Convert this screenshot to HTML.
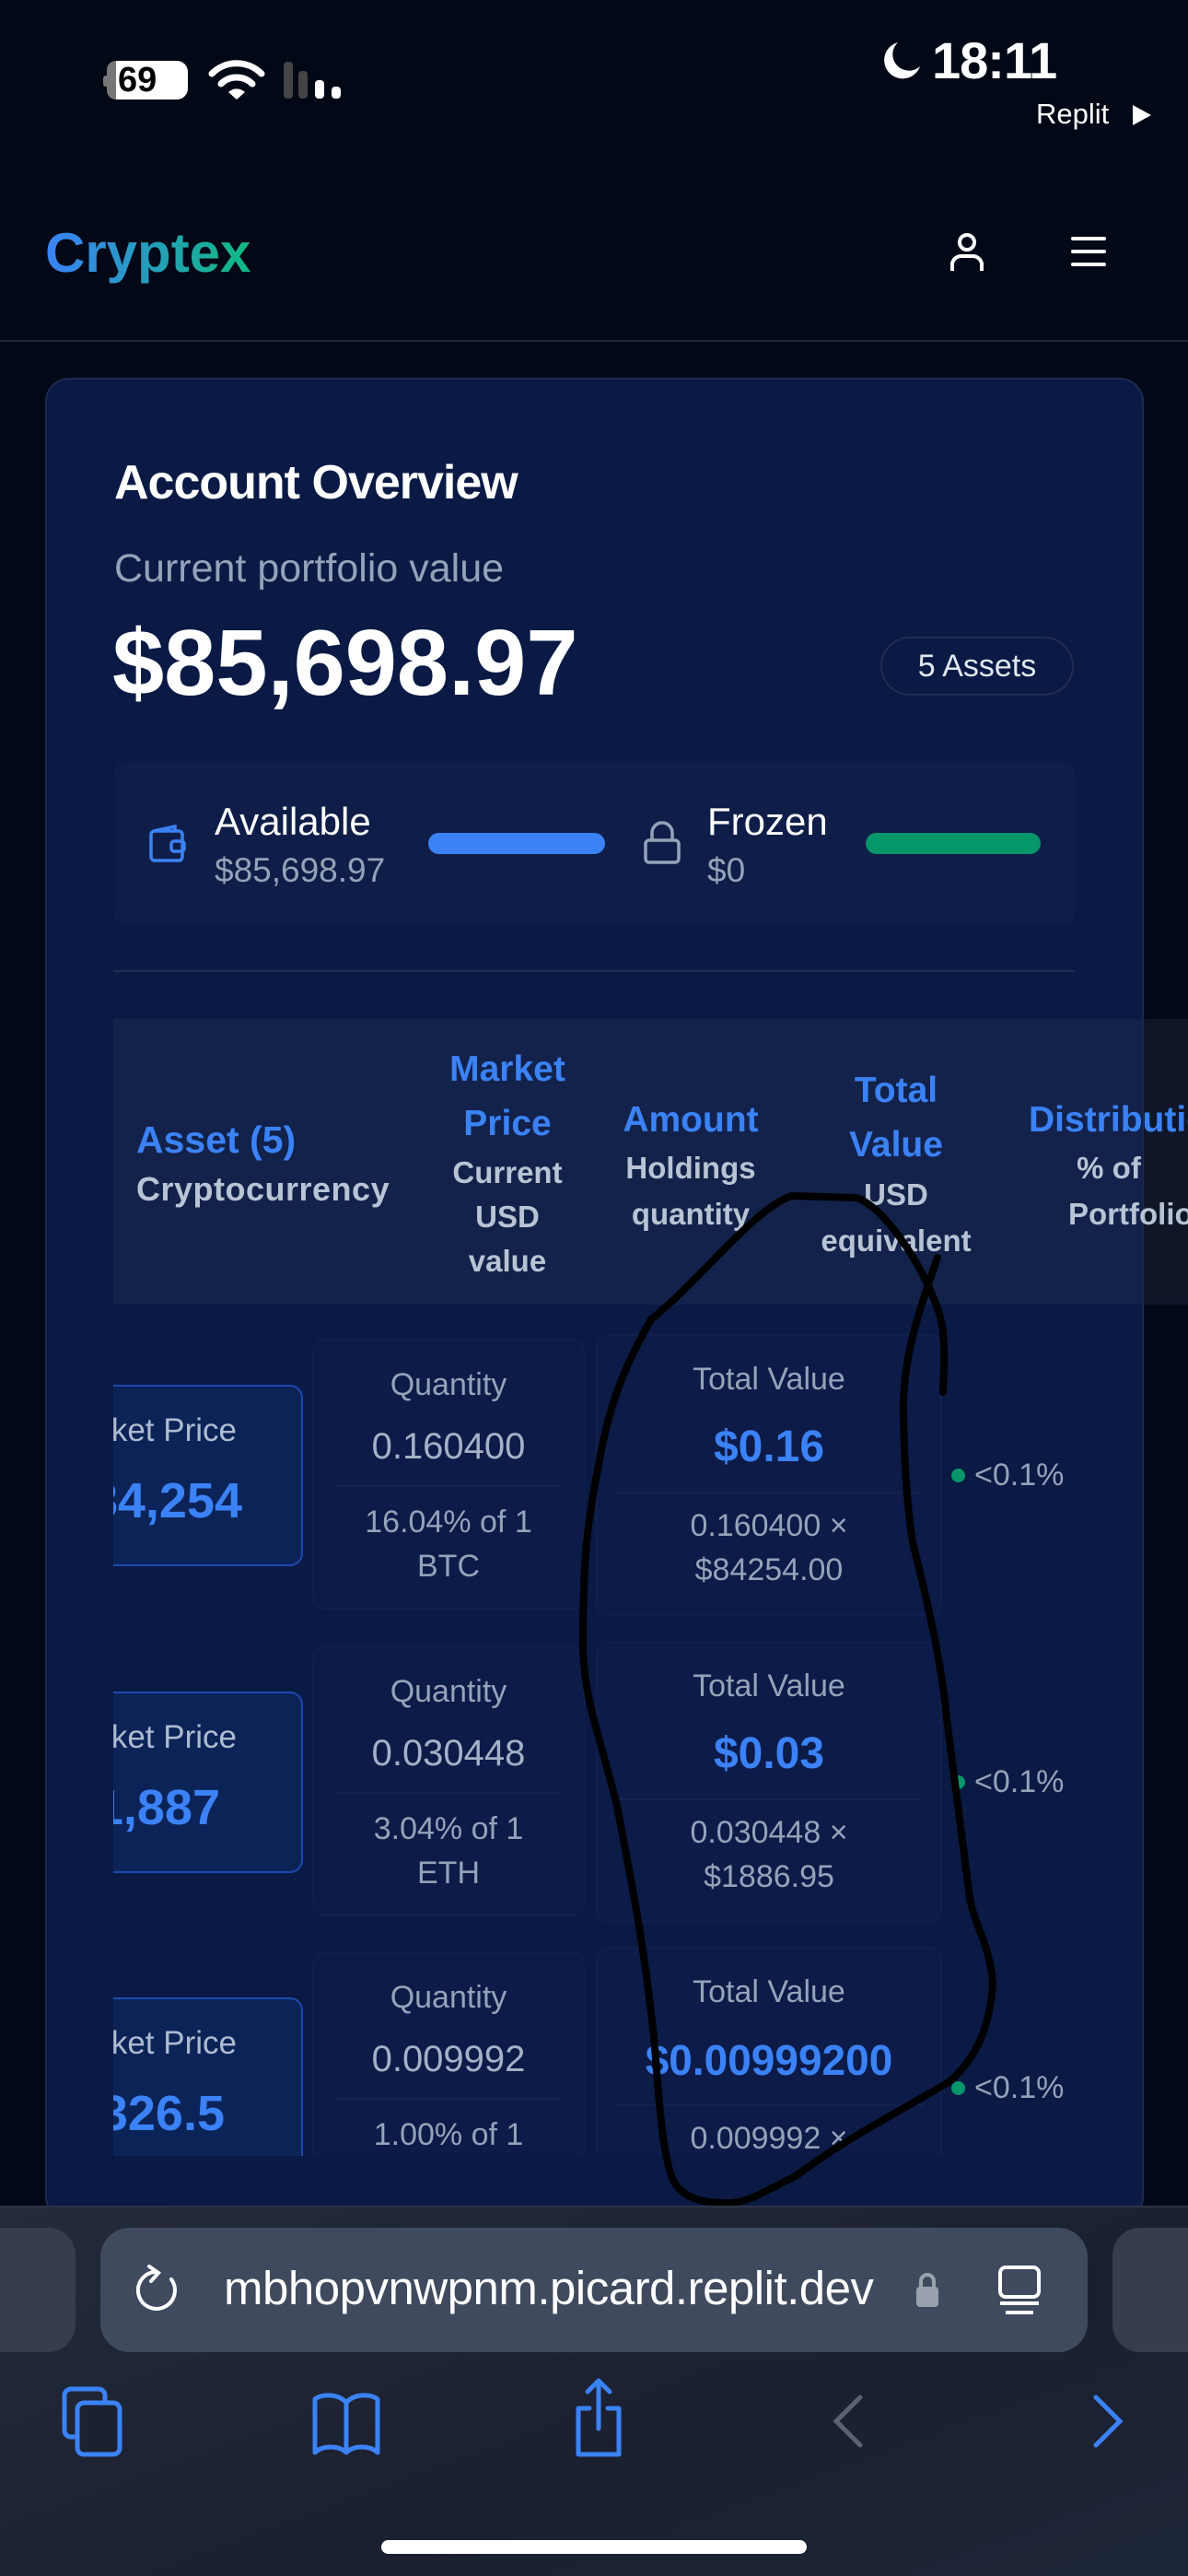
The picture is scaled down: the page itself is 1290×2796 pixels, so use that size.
<!DOCTYPE html>
<html><head><meta charset="utf-8">
<style>
*{margin:0;padding:0;box-sizing:border-box}
html,body{width:1290px;height:2796px;overflow:hidden;background:#030816;font-family:"Liberation Sans",sans-serif}
.a{position:absolute;white-space:nowrap}
.c{text-align:center}
.blue{color:#3b82f6}
.gr{color:#94a3b8}
.lg{color:#cbd5e1}
.box{position:absolute;border-radius:14px}
</style></head><body>

<!-- status bar -->
<div class="a" style="left:116px;top:66px;width:88px;height:42px;border-radius:12px;background:#fff"></div>
<div class="a" style="left:116px;top:66px;width:10px;height:42px;border-radius:12px 0 0 12px;background:#777"></div>
<div class="a" style="left:112px;top:82px;width:6px;height:12px;border-radius:3px;background:#777"></div>
<div class="a" style="left:128px;top:64px;font-size:38px;font-weight:bold;color:#000;line-height:46px">69</div>
<svg class="a" style="left:226px;top:64px" width="62" height="46" viewBox="0 0 62 46"><path d="M4 16 A38 38 0 0 1 58 16" stroke="#fff" stroke-width="7" fill="none" stroke-linecap="round"/><path d="M14 27 A24 24 0 0 1 48 27" stroke="#fff" stroke-width="7" fill="none" stroke-linecap="round"/><path d="M31 44 L22 36 A13 13 0 0 1 40 36 Z" fill="#fff"/></svg>
<div class="a" style="left:308px;top:67px;width:10px;height:40px;border-radius:4px;background:#444"></div>
<div class="a" style="left:324px;top:77px;width:10px;height:30px;border-radius:4px;background:#444"></div>
<div class="a" style="left:342px;top:87px;width:10px;height:20px;border-radius:4px;background:#fff"></div>
<div class="a" style="left:360px;top:94px;width:10px;height:13px;border-radius:4px;background:#fff"></div>
<svg class="a" style="left:957px;top:44px" width="44" height="44" viewBox="0 0 44 44"><path d="M18 2 A20 20 0 1 0 42 28 A17 17 0 0 1 18 2 Z" fill="#fff"/></svg>
<div class="a" style="left:1012px;top:36px;font-size:56px;font-weight:bold;color:#fff;line-height:60px;letter-spacing:-1px">18:11</div>
<div class="a" style="left:1125px;top:106px;font-size:31px;color:#fff;line-height:36px">Replit</div>
<svg class="a" style="left:1228px;top:112px" width="24" height="26"><path d="M2 2 L22 13 L2 24Z" fill="#fff"/></svg>

<!-- header -->
<div class="a" style="left:49px;top:240px;font-size:60px;font-weight:bold;line-height:70px;background:linear-gradient(90deg,#3b82f6,#10b981);-webkit-background-clip:text;background-clip:text;color:transparent">Cryptex</div>
<svg class="a" style="left:1030px;top:252px" width="40" height="44" viewBox="0 0 40 44" fill="none" stroke="#fff" stroke-width="4"><circle cx="20" cy="11" r="8"/><path d="M4 42 V34 A10 10 0 0 1 14 26 H26 A10 10 0 0 1 36 34 V42"/></svg>
<svg class="a" style="left:1162px;top:256px" width="40" height="34" fill="none" stroke="#fff" stroke-width="4" stroke-linecap="round"><path d="M3 3H37M3 17H37M3 31H37"/></svg>
<div class="a" style="left:0;top:369px;width:1290px;height:2px;background:#1e2535"></div>

<!-- card -->
<div class="a" style="left:49px;top:410px;width:1193px;height:2000px;border-radius:26px;background:#0a1a45;border:2px solid #1b2a52"></div>

<div class="a" style="left:124px;top:494px;font-size:52px;font-weight:bold;color:#fff;line-height:60px;letter-spacing:-1px">Account Overview</div>
<div class="a gr" style="left:124px;top:592px;font-size:43px;line-height:50px">Current portfolio value</div>
<div class="a" style="left:122px;top:664px;font-size:101px;font-weight:bold;color:#fff;line-height:112px">$85,698.97</div>
<div class="a c" style="left:956px;top:691px;width:210px;height:64px;border-radius:32px;border:2px solid #1f2d50;font-size:34px;line-height:60px;color:#e2e8f0">5 Assets</div>

<div class="box" style="left:123px;top:826px;width:1044px;height:179px;background:#0f1e48"></div>
<svg class="a" style="left:160px;top:893px" width="46" height="46" viewBox="0 0 46 46" fill="none" stroke="#3b82f6" stroke-width="3.5"><rect x="4" y="9" width="34" height="32" rx="4"/><path d="M7 9 L30 4 V9"/><rect x="26" y="20" width="14" height="11" rx="3"/></svg>
<div class="a" style="left:233px;top:868px;font-size:42px;line-height:48px;color:#fff">Available</div>
<div class="a gr" style="left:233px;top:924px;font-size:37px;line-height:42px">$85,698.97</div>
<div class="a" style="left:465px;top:904px;width:192px;height:23px;border-radius:12px;background:#3b82f6"></div>
<svg class="a" style="left:697px;top:891px" width="44" height="48" viewBox="0 0 44 48" fill="none" stroke="#94a3b8" stroke-width="3.5"><rect x="4" y="21" width="36" height="24" rx="4"/><path d="M11 21 V13 A11 11 0 0 1 33 13 V21"/></svg>
<div class="a" style="left:768px;top:868px;font-size:42px;line-height:48px;color:#fff">Frozen</div>
<div class="a gr" style="left:768px;top:924px;font-size:37px;line-height:42px">$0</div>
<div class="a" style="left:940px;top:904px;width:190px;height:23px;border-radius:12px;background:#059669"></div>
<div class="a" style="left:123px;top:1053px;width:1044px;height:2px;background:#1f2d50"></div>

<!-- table header -->
<div class="a" style="left:123px;top:1106px;width:1118px;height:310px;background:#13224a"></div>
<div class="a" style="left:1242px;top:1106px;width:48px;height:310px;background:#0f1628"></div>
<div class="a blue" style="left:148px;top:1214px;font-size:41px;font-weight:bold;line-height:46px">Asset (5)</div>
<div class="a" style="left:148px;top:1271px;font-size:36px;font-weight:bold;line-height:40px;color:#b8c3d4;letter-spacing:0.5px">Cryptocurrency</div>

<div class="a c blue" style="left:451px;top:1131px;width:200px;font-size:39px;font-weight:bold;line-height:59px">Market<br>Price</div>
<div class="a c" style="left:451px;top:1249px;width:200px;font-size:33px;font-weight:bold;line-height:48px;color:#b8c3d4">Current<br>USD<br>value</div>

<div class="a c blue" style="left:650px;top:1186px;width:200px;font-size:39px;font-weight:bold;line-height:59px">Amount</div>
<div class="a c" style="left:650px;top:1243px;width:200px;font-size:33px;font-weight:bold;line-height:50px;color:#b8c3d4">Holdings<br>quantity</div>

<div class="a c blue" style="left:873px;top:1154px;width:200px;font-size:39px;font-weight:bold;line-height:59px">Total<br>Value</div>
<div class="a c" style="left:853px;top:1272px;width:240px;font-size:33px;font-weight:bold;line-height:50px;color:#b8c3d4">USD<br>equivalent</div>

<div class="a blue" style="left:1117px;top:1186px;font-size:39px;font-weight:bold;line-height:59px">Distribution</div>
<div class="a" style="left:1160px;top:1243px;font-size:33px;font-weight:bold;line-height:50px;color:#b8c3d4">&nbsp;% of<br>Portfolio</div>

<!-- rows -->
<div class="a" style="left:123px;top:1430px;width:1118px;height:910px;overflow:hidden">
  <div class="a" style="left:0;top:0;width:1118px;height:340px">
    <div class="box" style="left:-60px;top:73px;width:266px;height:197px;background:#0c2358;border:2px solid #1d4ab0"></div>
    <div class="a" style="left:-200px;top:101px;width:334px;text-align:right;font-size:35px;line-height:44px;color:#aebbd0">Market Price</div>
    <div class="a blue" style="left:-200px;top:167px;width:340px;text-align:right;font-size:54px;font-weight:bold;line-height:64px">$84,254</div>
    <div class="box" style="left:216px;top:23px;width:296px;height:294px;background:#0c1b48;border:2px solid #111f4c"></div>
    <div class="a c gr" style="left:216px;top:52px;width:296px;font-size:34px;line-height:42px">Quantity</div>
    <div class="a c" style="left:216px;top:116px;width:296px;font-size:40px;line-height:48px;color:#a5b1c6">0.160400</div>
    <div class="a" style="left:240px;top:182px;width:248px;height:2px;background:#13224f"></div>
    <div class="a c gr" style="left:216px;top:198px;width:296px;font-size:34px;line-height:48px">16.04% of 1<br>BTC</div>
    <div class="box" style="left:524px;top:18px;width:376px;height:306px;background:#0c1b48;border:2px solid #111f4c"></div>
    <div class="a c gr" style="left:524px;top:46px;width:376px;font-size:34px;line-height:42px">Total Value</div>
    <div class="a c blue" style="left:524px;top:113px;width:376px;font-size:48px;font-weight:bold;line-height:56px">$0.16</div>
    <div class="a" style="left:544px;top:189px;width:336px;height:2px;background:#13224f"></div>
    <div class="a c gr" style="left:524px;top:202px;width:376px;font-size:34px;line-height:48px">0.160400 ×<br>$84254.00</div>
    <div class="a" style="left:910px;top:164px;width:15px;height:15px;border-radius:50%;background:#059669"></div>
    <div class="a gr" style="left:935px;top:150px;font-size:34px;line-height:42px">&lt;0.1%</div>
  </div>
  <div class="a" style="left:0;top:333px;width:1118px;height:340px">
    <div class="box" style="left:-60px;top:73px;width:266px;height:197px;background:#0c2358;border:2px solid #1d4ab0"></div>
    <div class="a" style="left:-200px;top:101px;width:334px;text-align:right;font-size:35px;line-height:44px;color:#aebbd0">Market Price</div>
    <div class="a blue" style="left:-200px;top:167px;width:316px;text-align:right;font-size:54px;font-weight:bold;line-height:64px">$1,887</div>
    <div class="box" style="left:216px;top:23px;width:296px;height:294px;background:#0c1b48;border:2px solid #111f4c"></div>
    <div class="a c gr" style="left:216px;top:52px;width:296px;font-size:34px;line-height:42px">Quantity</div>
    <div class="a c" style="left:216px;top:116px;width:296px;font-size:40px;line-height:48px;color:#a5b1c6">0.030448</div>
    <div class="a" style="left:240px;top:182px;width:248px;height:2px;background:#13224f"></div>
    <div class="a c gr" style="left:216px;top:198px;width:296px;font-size:34px;line-height:48px">3.04% of 1<br>ETH</div>
    <div class="box" style="left:524px;top:18px;width:376px;height:306px;background:#0c1b48;border:2px solid #111f4c"></div>
    <div class="a c gr" style="left:524px;top:46px;width:376px;font-size:34px;line-height:42px">Total Value</div>
    <div class="a c blue" style="left:524px;top:113px;width:376px;font-size:48px;font-weight:bold;line-height:56px">$0.03</div>
    <div class="a" style="left:544px;top:189px;width:336px;height:2px;background:#13224f"></div>
    <div class="a c gr" style="left:524px;top:202px;width:376px;font-size:34px;line-height:48px">0.030448 ×<br>$1886.95</div>
    <div class="a" style="left:910px;top:164px;width:15px;height:15px;border-radius:50%;background:#059669"></div>
    <div class="a gr" style="left:935px;top:150px;font-size:34px;line-height:42px">&lt;0.1%</div>
  </div>
  <div class="a" style="left:0;top:665px;width:1118px;height:340px">
    <div class="box" style="left:-60px;top:73px;width:266px;height:197px;background:#0c2358;border:2px solid #1d4ab0"></div>
    <div class="a" style="left:-200px;top:101px;width:334px;text-align:right;font-size:35px;line-height:44px;color:#aebbd0">Market Price</div>
    <div class="a blue" style="left:-200px;top:167px;width:321px;text-align:right;font-size:54px;font-weight:bold;line-height:64px">$326.5</div>
    <div class="box" style="left:216px;top:23px;width:296px;height:294px;background:#0c1b48;border:2px solid #111f4c"></div>
    <div class="a c gr" style="left:216px;top:52px;width:296px;font-size:34px;line-height:42px">Quantity</div>
    <div class="a c" style="left:216px;top:116px;width:296px;font-size:40px;line-height:48px;color:#a5b1c6">0.009992</div>
    <div class="a" style="left:240px;top:182px;width:248px;height:2px;background:#13224f"></div>
    <div class="a c gr" style="left:216px;top:198px;width:296px;font-size:34px;line-height:48px">1.00% of 1<br>SOL</div>
    <div class="box" style="left:524px;top:18px;width:376px;height:306px;background:#0c1b48;border:2px solid #111f4c"></div>
    <div class="a c gr" style="left:524px;top:46px;width:376px;font-size:34px;line-height:42px">Total Value</div>
    <div class="a c blue" style="left:514px;top:113px;width:396px;font-size:46px;font-weight:bold;line-height:56px">$0.00999200</div>
    <div class="a" style="left:544px;top:189px;width:336px;height:2px;background:#13224f"></div>
    <div class="a c gr" style="left:524px;top:202px;width:376px;font-size:34px;line-height:48px">0.009992 ×<br>$326.50</div>
    <div class="a" style="left:910px;top:164px;width:15px;height:15px;border-radius:50%;background:#059669"></div>
    <div class="a gr" style="left:935px;top:150px;font-size:34px;line-height:42px">&lt;0.1%</div>
  </div>
</div>

<!-- scribble -->
<svg class="a" style="left:0;top:0" width="1290" height="2796" fill="none" stroke="#000" stroke-width="8" stroke-linecap="round" stroke-linejoin="round">
<path d="M1024 1511 C1026 1470 1026 1440 1018 1420 C1000 1370 960 1310 930 1300 L860 1298 C820 1310 760 1390 707 1432 C680 1480 662 1520 650 1590 C636 1660 633 1700 633 1792 C636 1850 650 1880 670 1960 C685 2040 698 2100 710 2211 C716 2280 718 2330 730 2365 C740 2385 760 2392 795 2391 C820 2388 835 2375 864 2362 C920 2320 980 2290 1030 2260 C1060 2235 1075 2200 1078 2153 C1075 2110 1058 2090 1053 2060 C1040 1960 1030 1880 1028 1865 C1022 1800 1005 1730 991 1674 C983 1620 981 1570 981 1520 C983 1470 995 1430 1018 1365"/>
</svg>

<!-- bottom toolbar -->
<div class="a" style="left:0;top:2394px;width:1290px;height:402px;background:linear-gradient(160deg,#232a3a 0%,#1a2030 60%,#1c2538 100%);border-top:2px solid #2c3344"></div>
<div class="a" style="left:-40px;top:2418px;width:122px;height:135px;border-radius:30px;background:#353d4f"></div>
<div class="a" style="left:1208px;top:2418px;width:122px;height:135px;border-radius:30px;background:#353d4f"></div>
<div class="a" style="left:109px;top:2418px;width:1072px;height:135px;border-radius:32px;background:#404a5e"></div>
<svg class="a" style="left:148px;top:2458px" width="50" height="54" viewBox="0 0 50 54" fill="none" stroke="#fff" stroke-width="4" stroke-linecap="round"><path d="M20 8 A20 20 0 1 0 38 16"/><path d="M14 2 L24 9 L16 18"/></svg>
<div class="a" style="left:243px;top:2454px;font-size:51px;line-height:60px;color:#fff;letter-spacing:-0.5px">mbhopvnwpnm.picard.replit.dev</div>
<svg class="a" style="left:992px;top:2466px" width="30" height="40" viewBox="0 0 30 40"><rect x="3" y="16" width="24" height="22" rx="4" fill="#9aa1ae"/><path d="M8 16 V10 A7 7 0 0 1 22 10 V16" stroke="#9aa1ae" stroke-width="4" fill="none"/></svg>
<svg class="a" style="left:1082px;top:2458px" width="50" height="56" viewBox="0 0 50 56" fill="none" stroke="#fff" stroke-width="4"><rect x="4" y="3" width="42" height="32" rx="6"/><path d="M4 42H46M10 52H40"/></svg>
<svg class="a" style="left:64px;top:2588px" width="76" height="80" viewBox="0 0 76 80" fill="none" stroke="#3b82f6" stroke-width="5"><rect x="6" y="5" width="44" height="52" rx="7"/><rect x="20" y="20" width="46" height="56" rx="7" fill="#1b2131"/></svg>
<svg class="a" style="left:338px;top:2594px" width="76" height="72" viewBox="0 0 76 72" fill="none" stroke="#3b82f6" stroke-width="5" stroke-linejoin="round"><path d="M38 14 C30 4 12 4 4 10 V68 C12 60 30 60 38 68 C46 60 64 60 72 68 V10 C64 4 46 4 38 14 Z M38 14 V68"/></svg>
<svg class="a" style="left:618px;top:2580px" width="64" height="90" viewBox="0 0 64 90" fill="none" stroke="#3b82f6" stroke-width="5" stroke-linecap="round" stroke-linejoin="round"><path d="M32 4 V56 M20 16 L32 4 L44 16"/><path d="M22 34 H10 V84 H54 V34 H42"/></svg>
<svg class="a" style="left:900px;top:2598px" width="40" height="60" fill="none" stroke="#5b6170" stroke-width="5" stroke-linecap="round"><path d="M34 4 L8 30 L34 56"/></svg>
<svg class="a" style="left:1184px;top:2598px" width="40" height="60" fill="none" stroke="#3b82f6" stroke-width="5" stroke-linecap="round"><path d="M6 4 L32 30 L6 56"/></svg>
<div class="a" style="left:414px;top:2757px;width:462px;height:15px;border-radius:8px;background:#fff"></div>
</body></html>
